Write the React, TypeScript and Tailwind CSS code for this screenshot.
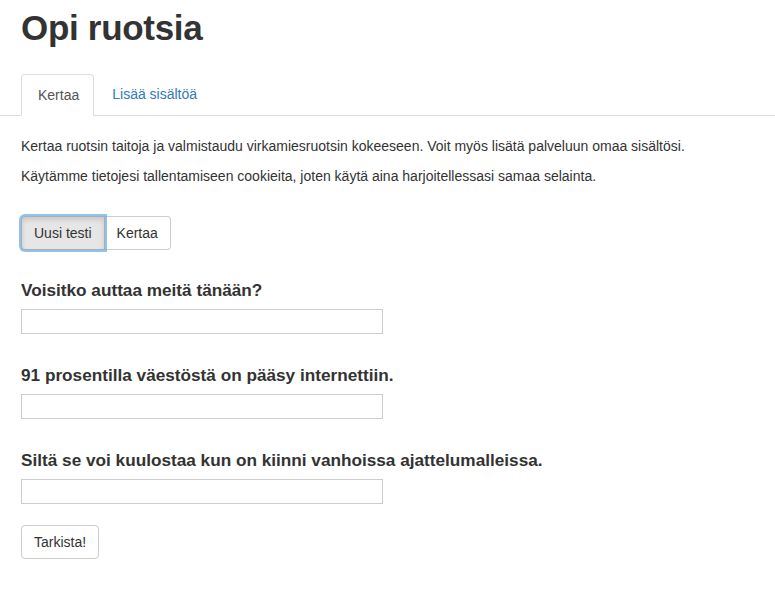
import React from "react";

export default function App() {
  const questions = [
    "Voisitko auttaa meitä tänään?",
    "91 prosentilla väestöstä on pääsy internettiin.",
    "Siltä se voi kuulostaa kun on kiinni vanhoissa ajattelumalleissa.",
  ];
  return (
    <div
      className="w-[775px] h-[614px] bg-white text-[#333] overflow-hidden"
      style={{ fontFamily: '"Liberation Sans", Arial, sans-serif' }}
    >
      <div className="pl-[21px] pt-[8px]">
        <h1 className="text-[35px] font-bold leading-[39px] tracking-[-0.3px] m-0">Opi ruotsia</h1>
      </div>
      <div className="flex pl-[21px] mt-[27px] border-b border-[#ddd] h-[42px]">
        <div className="pl-[16px] pr-[14px] h-[42px] flex items-center border border-[#ddd] border-b-white rounded-t-[4px] bg-white text-[14px] text-[#555]">
          Kertaa
        </div>
        <div className="px-[18px] h-[41px] flex items-center text-[14px] text-[#337ab7]">
          Lisää sisältöä
        </div>
      </div>
      <div className="pl-[21px] pt-[20px] text-[14px] leading-[20px]">
        <p className="mb-[10px]">
          Kertaa ruotsin taitoja ja valmistaudu virkamiesruotsin kokeeseen. Voit myös lisätä palveluun omaa sisältösi.
        </p>
        <p className="mb-[10px]">
          Käytämme tietojesi tallentamiseen cookieita, joten käytä aina harjoitellessasi samaa selainta.
        </p>
        <div className="flex mt-[30px]">
          <button className="h-[34px] px-[12px] text-[14px] bg-[#e6e6e6] border border-[#adadad] rounded-l-[4px] shadow-[0_0_0_2px_rgba(102,175,233,0.75),inset_0_3px_5px_rgba(0,0,0,0.125)] relative z-10">
            Uusi testi
          </button>
          <button className="h-[34px] px-[12px] text-[14px] bg-white border border-[#ccc] border-l-0 rounded-r-[4px]">
            Kertaa
          </button>
        </div>
        <div className="mt-[30px]">
          {questions.map((q, i) => (
            <div key={i} className={i === 0 ? "" : "mt-[31px]"}>
              <h3 className="text-[17.2px] font-bold leading-[20px] m-0 mb-[9px] text-[#333]">{q}</h3>
              <input
                type="text"
                className="block w-[362px] h-[25px] border border-[#ccc] bg-white outline-none"
              />
            </div>
          ))}
        </div>
        <button className="mt-[21px] h-[34px] px-[12px] text-[14px] bg-white border border-[#ccc] rounded-[4px]">
          Tarkista!
        </button>
      </div>
    </div>
  );
}
